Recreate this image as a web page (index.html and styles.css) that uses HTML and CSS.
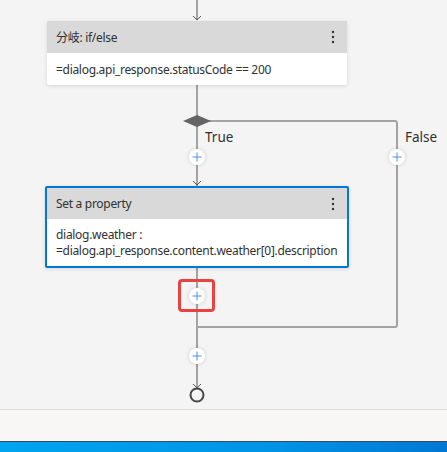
FILE: index.html
```html
<!DOCTYPE html>
<html>
<head>
<meta charset="utf-8">
<link rel="stylesheet" href="styles.css">
</head>
<body>
<div class="screen">
  <div class="canvas">
    <svg class="wires" width="447" height="409" viewBox="0 0 447 409">
      <g class="wire">
        <path d="M197 0 V20"/>
        <path d="M197 85 V121"/>
        <path d="M197 121 H395 Q397 121 397 123 V325 Q397 327 395 327 H197"/>
        <path d="M197 121 V186"/>
        <path d="M197 268 V388"/>
      </g>
      <g class="chev">
        <path d="M193 16 L197 20 L201 16"/>
        <path d="M193 181 L197 185 L201 181"/>
        <path d="M193 384 L197 388 L201 384"/>
      </g>
      <polygon class="diamond" points="183,121 197,115 211,121 197,127"/>
      <circle class="end" cx="197" cy="395" r="6.5"/>
    </svg>

    <div class="node node-if">
      <div class="node-head">
        <span class="node-title">分岐: if/else</span>
        <svg class="kebab" width="4" height="14" viewBox="0 0 4 14"><circle cx="2" cy="2" r="1.2"/><circle cx="2" cy="7" r="1.2"/><circle cx="2" cy="12" r="1.2"/></svg>
      </div>
      <div class="node-body">=dialog.api_response.statusCode == 200</div>
    </div>

    <span class="branch branch-true">True</span>
    <span class="branch branch-false">False</span>

    <div class="node node-set is-selected">
      <div class="node-head">
        <span class="node-title">Set a property</span>
        <svg class="kebab" width="4" height="14" viewBox="0 0 4 14"><circle cx="2" cy="2" r="1.2"/><circle cx="2" cy="7" r="1.2"/><circle cx="2" cy="12" r="1.2"/></svg>
      </div>
      <div class="node-body node-body-tall">dialog.weather :<br>=dialog.api_response.content.weather[0].description</div>
    </div>

    <div class="add add-true"><svg width="10" height="10" viewBox="0 0 10 10"><path d="M5 0.5 V9.5 M0.5 5 H9.5"/></svg></div>
    <div class="add add-false"><svg width="10" height="10" viewBox="0 0 10 10"><path d="M5 0.5 V9.5 M0.5 5 H9.5"/></svg></div>
    <div class="add add-after"><svg width="10" height="10" viewBox="0 0 10 10"><path d="M5 0.5 V9.5 M0.5 5 H9.5"/></svg></div>
    <div class="add add-end"><svg width="10" height="10" viewBox="0 0 10 10"><path d="M5 0.5 V9.5 M0.5 5 H9.5"/></svg></div>

    <div class="highlight"></div>
  </div>
  <div class="statusbar"></div>
  <div class="taskbar"></div>
</div>
</body>
</html>
```

FILE: styles.css
```css
html, body {
  margin: 0;
  padding: 0;
}
body {
  background: #f4f4f4;
  font-family: "Noto Sans", "Noto Sans CJK JP", sans-serif;
  color: #323130;
}
.screen {
  width: 447px;
  height: 452px;
  overflow: hidden;
  display: flex;
  flex-direction: column;
}
.canvas {
  position: relative;
  height: 409px;
  flex: none;
  background: #f4f4f4;
}
.wires {
  position: absolute;
  left: 0;
  top: 0;
}
.wire path {
  fill: none;
  stroke: #a3a3a3;
  stroke-width: 2;
}
.chev path {
  fill: none;
  stroke: #555;
  stroke-width: 1;
}
.diamond {
  fill: #656565;
}
.end {
  fill: none;
  stroke: #464646;
  stroke-width: 2;
}
.node {
  position: absolute;
  background: #fff;
  box-shadow: 0 1px 4px rgba(0,0,0,0.12);
  border-radius: 2px;
  display: flex;
  flex-direction: column;
}
.node-if {
  left: 47px;
  top: 21px;
  width: 300px;
}
.node-set {
  left: 45px;
  top: 186px;
  width: 300px;
  border: 2px solid #0078d4;
}
.node-head {
  height: 32px;
  background: #d9d9d9;
  display: flex;
  align-items: center;
  justify-content: space-between;
  padding: 0 12px 0 9px;
  font-size: 12px;
  letter-spacing: -0.3px;
}
.node-set .node-head {
  height: 31px;
}
.node-title {
  white-space: nowrap;
}
.kebab circle {
  fill: #333;
}
.node-body {
  height: 32px;
  display: flex;
  align-items: center;
  padding: 0 9px;
  font-size: 12px;
  letter-spacing: -0.3px;
  white-space: nowrap;
}
.node-body-tall {
  height: 47px;
  display: block;
  padding-top: 8px;
  box-sizing: border-box;
  line-height: 15.5px;
}
.branch {
  position: absolute;
  font-size: 13.5px;
  line-height: 17px;
  color: #323130;
}
.branch-true { left: 205px; top: 129px; }
.branch-false { left: 405px; top: 129px; }
.add {
  position: absolute;
  width: 16px;
  height: 16px;
  margin: -8px 0 0 -8px;
  border-radius: 50%;
  background: #fff;
  box-shadow: 0 0 4px rgba(0,0,0,0.16);
  display: flex;
  align-items: center;
  justify-content: center;
}
.add path {
  stroke: #4a8ef0;
  stroke-width: 1;
  fill: none;
}
.add-true { left: 197px; top: 157px; }
.add-false { left: 397px; top: 157px; }
.add-after { left: 197px; top: 296px; }
.add-end { left: 197px; top: 356px; }
.highlight {
  position: absolute;
  left: 178px;
  top: 279px;
  width: 31px;
  height: 27px;
  border: 3px solid #e94341;
  border-radius: 4px;
}
.statusbar {
  flex: none;
  height: 31px;
  border-top: 1px solid #dcdcdc;
  background: #f8f7f6;
}
.taskbar {
  flex: none;
  height: 11px;
  border-top: 1px solid #3a4a5a;
  background: linear-gradient(90deg, #00a4ef 0%, #0094e6 60%, #0078d4 100%);
}
```
